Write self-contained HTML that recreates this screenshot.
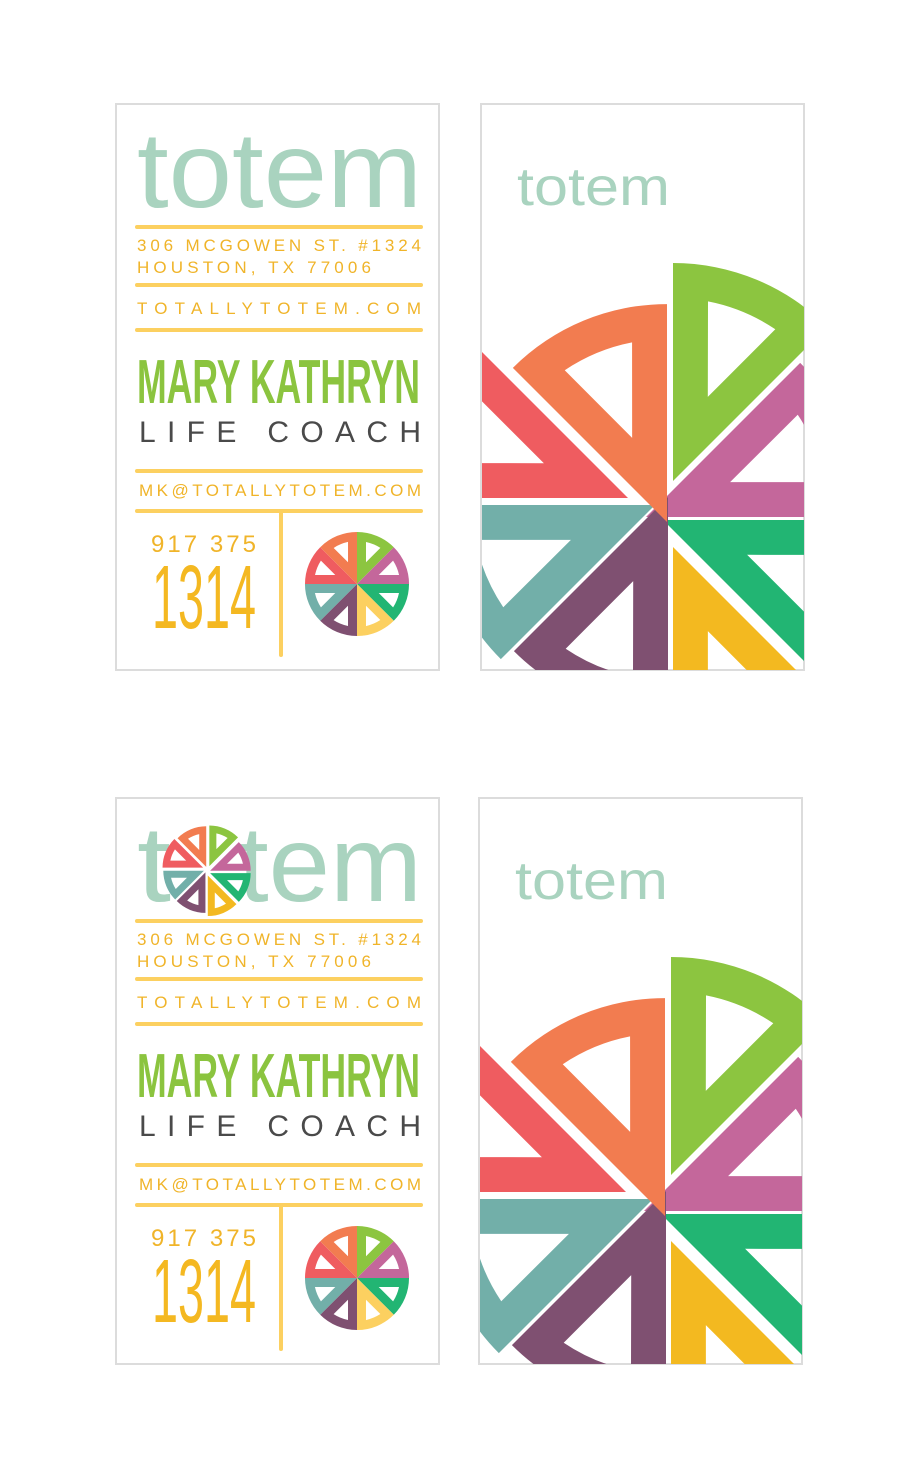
<!DOCTYPE html>
<html><head><meta charset="utf-8"><style>
html,body{margin:0;padding:0;background:#fff;}
svg{display:block;}
text{font-family:"Liberation Sans",sans-serif;}
</style></head><body>
<svg width="900" height="1473" viewBox="0 0 900 1473" xmlns="http://www.w3.org/2000/svg">
<defs>
  <path id="bs" fill-rule="evenodd" d="M0,0 L0,-218 A218,218 0 0,1 154.1,-154.1 Z M34.8,-84.1 L102.3,-151.7 A183,183 0 0,0 35,-179.6 Z"/>
  <path id="ss" fill-rule="evenodd" d="M0,0 L0,-52 A52,52 0 0,1 36.8,-36.8 Z M9,-21.7 L23.4,-36.1 A43,43 0 0,0 9,-42 Z"/>
  <clipPath id="c1"><rect x="482" y="105" width="322" height="565"/></clipPath>
  <clipPath id="c2"><rect x="480" y="799" width="322" height="565"/></clipPath>
  <g id="pin">
    <use href="#bs" fill="#8cc540" transform="translate(673,481) rotate(0)"/>
    <use href="#bs" fill="#c4679b" transform="translate(646,517) rotate(45)"/>
    <use href="#bs" fill="#22b573" transform="translate(663,520) rotate(90)"/>
    <use href="#bs" fill="#f3b920" transform="translate(673,547) rotate(135)"/>
    <use href="#bs" fill="#72afa9" transform="translate(655,505) rotate(225)"/>
    <use href="#bs" fill="#7f5071" transform="translate(668,497) rotate(180)"/>
    <use href="#bs" fill="#ef5c60" transform="translate(628,498) rotate(270)"/>
    <use href="#bs" fill="#f27c50" transform="translate(667,522) rotate(315)"/>
  </g>
  <g id="wheel">
    <use href="#ss" fill="#8cc540" transform="rotate(0)"/>
    <use href="#ss" fill="#c4679b" transform="rotate(45)"/>
    <use href="#ss" fill="#22b573" transform="rotate(90)"/>
    <use href="#ss" fill="#fcd060" transform="rotate(135)"/>
    <use href="#ss" fill="#7f5071" transform="rotate(180)"/>
    <use href="#ss" fill="#72afa9" transform="rotate(225)"/>
    <use href="#ss" fill="#ef5c60" transform="rotate(270)"/>
    <use href="#ss" fill="#f27c50" transform="rotate(315)"/>
  </g>
  <g id="wheel2">
    <use href="#ss" fill="#8cc540" transform="translate(3,-5) rotate(0)"/>
    <use href="#ss" fill="#c4679b" transform="translate(4,1) rotate(45)"/>
    <use href="#ss" fill="#22b573" transform="translate(4,4) rotate(90)"/>
    <use href="#ss" fill="#f3b920" transform="translate(1,7) rotate(135)"/>
    <use href="#ss" fill="#7f5071" transform="translate(-2,3) rotate(180)"/>
    <use href="#ss" fill="#72afa9" transform="translate(-4,1) rotate(225)"/>
    <use href="#ss" fill="#ef5c60" transform="translate(-5,-3) rotate(270)"/>
    <use href="#ss" fill="#f27c50" transform="translate(-1,-4) rotate(315)"/>
  </g>
  <g id="info">
    <g stroke="#fcd060" stroke-width="4" stroke-linecap="round">
      <line x1="137" y1="227" x2="421" y2="227"/>
      <line x1="137" y1="285" x2="421" y2="285"/>
      <line x1="137" y1="330" x2="421" y2="330"/>
      <line x1="137" y1="471" x2="421" y2="471"/>
      <line x1="137" y1="511" x2="421" y2="511"/>
      <line x1="281" y1="513" x2="281" y2="655"/>
    </g>
    <g fill="#f0b429">
      <text x="137" y="251" font-size="17" textLength="284" lengthAdjust="spacing">306 MCGOWEN ST. #1324</text>
      <text x="137" y="273" font-size="17" textLength="234" lengthAdjust="spacing">HOUSTON, TX 77006</text>
      <text x="137" y="314" font-size="17" textLength="284" lengthAdjust="spacing">TOTALLYTOTEM.COM</text>
      <text x="139" y="496" font-size="17" textLength="282" lengthAdjust="spacing">MK@TOTALLYTOTEM.COM</text>
      <text x="151" y="552" font-size="24" textLength="105" lengthAdjust="spacing">917 375</text>
      <text x="152" y="628" font-size="90" fill="#f4b821" textLength="104" lengthAdjust="spacingAndGlyphs">1314</text>
    </g>
    <text x="137" y="403" font-size="62" font-weight="bold" fill="#8bc43f" textLength="283" lengthAdjust="spacingAndGlyphs">MARY KATHRYN</text>
    <text x="139" y="442" font-size="30" fill="#4a4a4a" textLength="282" lengthAdjust="spacing">LIFE COACH</text>
    <use href="#wheel" transform="translate(357,584)"/>
  </g>
</defs>

<rect x="116" y="104" width="323" height="566" fill="#fff" stroke="#dcdcdc" stroke-width="2"/>
<text x="137" y="207" font-size="108" fill="#a9d3bf" textLength="285" lengthAdjust="spacingAndGlyphs">totem</text>
<use href="#info"/>

<rect x="481" y="104" width="323" height="566" fill="#fff" stroke="#dcdcdc" stroke-width="2"/>
<text x="517" y="205" font-size="54" fill="#a9d3bf" textLength="153" lengthAdjust="spacingAndGlyphs">totem</text>
<g clip-path="url(#c1)"><use href="#pin"/></g>

<rect x="116" y="798" width="323" height="566" fill="#fff" stroke="#dcdcdc" stroke-width="2"/>
<text x="137" y="901" font-size="108" fill="#a9d3bf" textLength="34" lengthAdjust="spacingAndGlyphs">t</text>
<text x="238" y="901" font-size="108" fill="#a9d3bf" textLength="184" lengthAdjust="spacingAndGlyphs">tem</text>
<use href="#wheel2" transform="translate(207,870) scale(0.78)"/>
<use href="#info" transform="translate(0,694)"/>

<rect x="479" y="798" width="323" height="566" fill="#fff" stroke="#dcdcdc" stroke-width="2"/>
<text x="515" y="899" font-size="54" fill="#a9d3bf" textLength="153" lengthAdjust="spacingAndGlyphs">totem</text>
<g clip-path="url(#c2)"><use href="#pin" transform="translate(-2,694)"/></g>
</svg>
</body></html>
